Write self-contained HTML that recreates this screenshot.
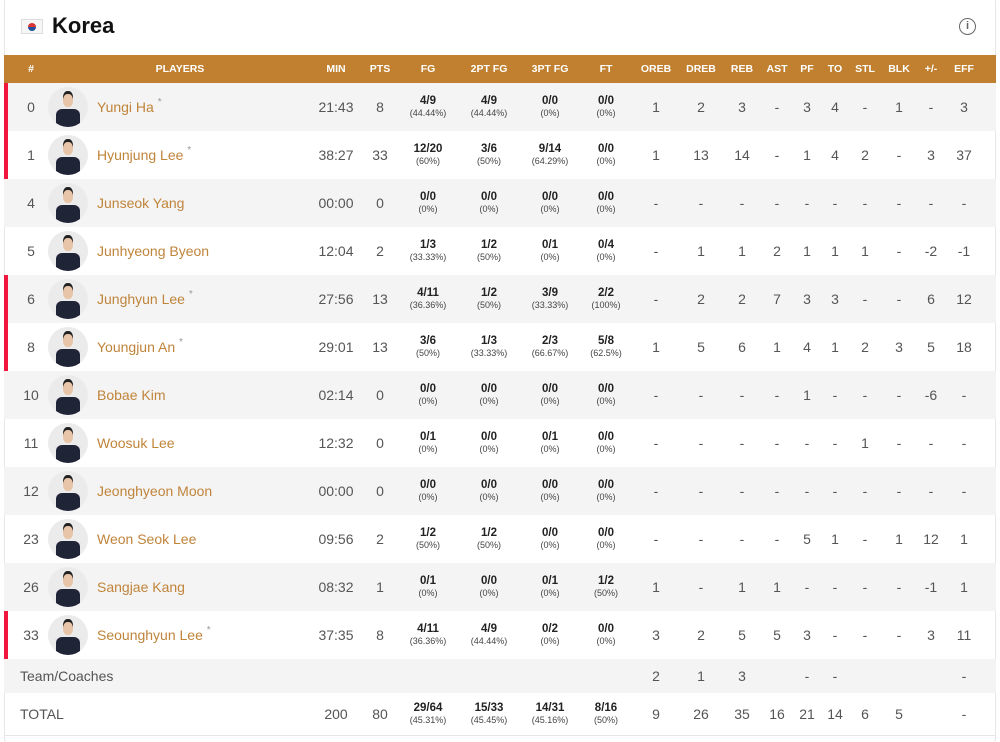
<!DOCTYPE html>
<html><head><meta charset="utf-8"><style>
*{margin:0;padding:0;box-sizing:border-box}
html,body{width:1000px;height:742px;overflow:hidden}
body{background:#fff;font-family:"Liberation Sans",sans-serif;position:relative}
.card{position:absolute;left:4px;top:-6px;width:992px;height:752px;border:1px solid #e6e6e6;border-radius:8px}
.title{position:absolute;left:52px;top:13px;font-size:22px;font-weight:bold;color:#111}
.flag{position:absolute;left:21px;top:19px;width:22px;height:15px;background:#f6f6f6;border:1px solid #ddd}
.flag:after{content:"";position:absolute;left:6px;top:3px;width:8px;height:8px;border-radius:50%;background:linear-gradient(#d33 50%,#2450a0 50%)}
.info{position:absolute;left:959px;top:18px;width:17px;height:17px;border:1.5px solid #666;border-radius:50%;font-size:11px;color:#666;text-align:center;line-height:14px;font-weight:bold}
.hd{position:absolute;left:4px;top:55px;width:992px;height:28px;background:#c08030}
.r{position:absolute;left:4px;width:992px;height:48px}
.g{background:#f4f4f4}
.st{border-left:4px solid #f0163c}
.r>span,.hd>span{position:absolute;top:0;height:100%;width:70px;margin-left:-39px;display:flex;flex-direction:column;align-items:center;justify-content:center;text-align:center;color:#555;font-size:14px}
.hd>span{color:#fff;font-size:10.5px;font-weight:bold}
.st>span{margin-left:-43px}
.r>span b{font-size:11.5px;color:#222;line-height:13px}
.r>span i{font-style:normal;font-size:9px;color:#444;line-height:11px}
.r>span.n{width:auto;margin-left:0;left:93px;color:#c0843a;align-items:flex-start;display:block;line-height:48px}
.r>span.n small{font-size:10px;color:#999;vertical-align:top;line-height:40px}
.st>span.n{left:89px}
.av{position:absolute;left:44px;top:4px;width:40px;height:40px;border-radius:50%;background:#ebebeb;overflow:hidden}
.st .av{left:40px}
.av:before{content:"";position:absolute;left:15px;top:7px;width:10px;height:13px;border-radius:45%;background:#e8c4a8;box-shadow:0 -3px 0 #222}
.av:after{content:"";position:absolute;left:8px;top:22px;width:24px;height:20px;border-radius:6px 6px 0 0;background:#1f2436}
.a{left:31px}.b{left:336px}.c{left:380px}.d{left:428px}.e{left:489px}.f{left:550px}.h{left:606px}.j{left:656px}.k{left:701px}.l{left:742px}.m{left:777px}.o{left:807px}.p{left:835px}.q{left:865px}.s{left:899px}.t{left:931px}.u{left:964px}
.foot{position:absolute;left:4px;top:735px;width:992px;border-top:1px solid #e6e6e6}
</style></head><body>
<div class="card"></div>
<div class="flag"></div><div class="title">Korea</div><div class="info">i</div>
<div class="hd"><span class="a">#</span><span style="left:180px">PLAYERS</span><span class="b">MIN</span><span class="c">PTS</span><span class="d">FG</span><span class="e">2PT FG</span><span class="f">3PT FG</span><span class="h">FT</span><span class="j">OREB</span><span class="k">DREB</span><span class="l">REB</span><span class="m">AST</span><span class="o">PF</span><span class="p">TO</span><span class="q">STL</span><span class="s">BLK</span><span class="t">+/-</span><span class="u">EFF</span></div>

<div class="r g st" style="top:83px"><span class="a">0</span><div class="av"></div><span class="n">Yungi Ha <small>*</small></span><span class="b">21:43</span><span class="c">8</span><span class="d"><b>4/9</b><i>(44.44%)</i></span><span class="e"><b>4/9</b><i>(44.44%)</i></span><span class="f"><b>0/0</b><i>(0%)</i></span><span class="h"><b>0/0</b><i>(0%)</i></span><span class="j">1</span><span class="k">2</span><span class="l">3</span><span class="m">-</span><span class="o">3</span><span class="p">4</span><span class="q">-</span><span class="s">1</span><span class="t">-</span><span class="u">3</span></div>

<div class="r st" style="top:131px"><span class="a">1</span><div class="av"></div><span class="n">Hyunjung Lee <small>*</small></span><span class="b">38:27</span><span class="c">33</span><span class="d"><b>12/20</b><i>(60%)</i></span><span class="e"><b>3/6</b><i>(50%)</i></span><span class="f"><b>9/14</b><i>(64.29%)</i></span><span class="h"><b>0/0</b><i>(0%)</i></span><span class="j">1</span><span class="k">13</span><span class="l">14</span><span class="m">-</span><span class="o">1</span><span class="p">4</span><span class="q">2</span><span class="s">-</span><span class="t">3</span><span class="u">37</span></div>

<div class="r g" style="top:179px"><span class="a">4</span><div class="av"></div><span class="n">Junseok Yang</span><span class="b">00:00</span><span class="c">0</span><span class="d"><b>0/0</b><i>(0%)</i></span><span class="e"><b>0/0</b><i>(0%)</i></span><span class="f"><b>0/0</b><i>(0%)</i></span><span class="h"><b>0/0</b><i>(0%)</i></span><span class="j">-</span><span class="k">-</span><span class="l">-</span><span class="m">-</span><span class="o">-</span><span class="p">-</span><span class="q">-</span><span class="s">-</span><span class="t">-</span><span class="u">-</span></div>

<div class="r" style="top:227px"><span class="a">5</span><div class="av"></div><span class="n">Junhyeong Byeon</span><span class="b">12:04</span><span class="c">2</span><span class="d"><b>1/3</b><i>(33.33%)</i></span><span class="e"><b>1/2</b><i>(50%)</i></span><span class="f"><b>0/1</b><i>(0%)</i></span><span class="h"><b>0/4</b><i>(0%)</i></span><span class="j">-</span><span class="k">1</span><span class="l">1</span><span class="m">2</span><span class="o">1</span><span class="p">1</span><span class="q">1</span><span class="s">-</span><span class="t">-2</span><span class="u">-1</span></div>

<div class="r g st" style="top:275px"><span class="a">6</span><div class="av"></div><span class="n">Junghyun Lee <small>*</small></span><span class="b">27:56</span><span class="c">13</span><span class="d"><b>4/11</b><i>(36.36%)</i></span><span class="e"><b>1/2</b><i>(50%)</i></span><span class="f"><b>3/9</b><i>(33.33%)</i></span><span class="h"><b>2/2</b><i>(100%)</i></span><span class="j">-</span><span class="k">2</span><span class="l">2</span><span class="m">7</span><span class="o">3</span><span class="p">3</span><span class="q">-</span><span class="s">-</span><span class="t">6</span><span class="u">12</span></div>

<div class="r st" style="top:323px"><span class="a">8</span><div class="av"></div><span class="n">Youngjun An <small>*</small></span><span class="b">29:01</span><span class="c">13</span><span class="d"><b>3/6</b><i>(50%)</i></span><span class="e"><b>1/3</b><i>(33.33%)</i></span><span class="f"><b>2/3</b><i>(66.67%)</i></span><span class="h"><b>5/8</b><i>(62.5%)</i></span><span class="j">1</span><span class="k">5</span><span class="l">6</span><span class="m">1</span><span class="o">4</span><span class="p">1</span><span class="q">2</span><span class="s">3</span><span class="t">5</span><span class="u">18</span></div>

<div class="r g" style="top:371px"><span class="a">10</span><div class="av"></div><span class="n">Bobae Kim</span><span class="b">02:14</span><span class="c">0</span><span class="d"><b>0/0</b><i>(0%)</i></span><span class="e"><b>0/0</b><i>(0%)</i></span><span class="f"><b>0/0</b><i>(0%)</i></span><span class="h"><b>0/0</b><i>(0%)</i></span><span class="j">-</span><span class="k">-</span><span class="l">-</span><span class="m">-</span><span class="o">1</span><span class="p">-</span><span class="q">-</span><span class="s">-</span><span class="t">-6</span><span class="u">-</span></div>

<div class="r" style="top:419px"><span class="a">11</span><div class="av"></div><span class="n">Woosuk Lee</span><span class="b">12:32</span><span class="c">0</span><span class="d"><b>0/1</b><i>(0%)</i></span><span class="e"><b>0/0</b><i>(0%)</i></span><span class="f"><b>0/1</b><i>(0%)</i></span><span class="h"><b>0/0</b><i>(0%)</i></span><span class="j">-</span><span class="k">-</span><span class="l">-</span><span class="m">-</span><span class="o">-</span><span class="p">-</span><span class="q">1</span><span class="s">-</span><span class="t">-</span><span class="u">-</span></div>

<div class="r g" style="top:467px"><span class="a">12</span><div class="av"></div><span class="n">Jeonghyeon Moon</span><span class="b">00:00</span><span class="c">0</span><span class="d"><b>0/0</b><i>(0%)</i></span><span class="e"><b>0/0</b><i>(0%)</i></span><span class="f"><b>0/0</b><i>(0%)</i></span><span class="h"><b>0/0</b><i>(0%)</i></span><span class="j">-</span><span class="k">-</span><span class="l">-</span><span class="m">-</span><span class="o">-</span><span class="p">-</span><span class="q">-</span><span class="s">-</span><span class="t">-</span><span class="u">-</span></div>

<div class="r" style="top:515px"><span class="a">23</span><div class="av"></div><span class="n">Weon Seok Lee</span><span class="b">09:56</span><span class="c">2</span><span class="d"><b>1/2</b><i>(50%)</i></span><span class="e"><b>1/2</b><i>(50%)</i></span><span class="f"><b>0/0</b><i>(0%)</i></span><span class="h"><b>0/0</b><i>(0%)</i></span><span class="j">-</span><span class="k">-</span><span class="l">-</span><span class="m">-</span><span class="o">5</span><span class="p">1</span><span class="q">-</span><span class="s">1</span><span class="t">12</span><span class="u">1</span></div>

<div class="r g" style="top:563px"><span class="a">26</span><div class="av"></div><span class="n">Sangjae Kang</span><span class="b">08:32</span><span class="c">1</span><span class="d"><b>0/1</b><i>(0%)</i></span><span class="e"><b>0/0</b><i>(0%)</i></span><span class="f"><b>0/1</b><i>(0%)</i></span><span class="h"><b>1/2</b><i>(50%)</i></span><span class="j">1</span><span class="k">-</span><span class="l">1</span><span class="m">1</span><span class="o">-</span><span class="p">-</span><span class="q">-</span><span class="s">-</span><span class="t">-1</span><span class="u">1</span></div>

<div class="r st" style="top:611px"><span class="a">33</span><div class="av"></div><span class="n">Seounghyun Lee <small>*</small></span><span class="b">37:35</span><span class="c">8</span><span class="d"><b>4/11</b><i>(36.36%)</i></span><span class="e"><b>4/9</b><i>(44.44%)</i></span><span class="f"><b>0/2</b><i>(0%)</i></span><span class="h"><b>0/0</b><i>(0%)</i></span><span class="j">3</span><span class="k">2</span><span class="l">5</span><span class="m">5</span><span class="o">3</span><span class="p">-</span><span class="q">-</span><span class="s">-</span><span class="t">3</span><span class="u">11</span></div>

<div class="r g" style="top:659px;height:34px"><span class="n" style="left:16px;color:#555;line-height:34px">Team/Coaches</span><span class="j">2</span><span class="k">1</span><span class="l">3</span><span class="o">-</span><span class="p">-</span><span class="u">-</span></div>

<div class="r" style="top:693px;height:42px"><span class="n" style="left:16px;color:#555;line-height:42px">TOTAL</span><span class="b">200</span><span class="c">80</span><span class="d"><b>29/64</b><i>(45.31%)</i></span><span class="e"><b>15/33</b><i>(45.45%)</i></span><span class="f"><b>14/31</b><i>(45.16%)</i></span><span class="h"><b>8/16</b><i>(50%)</i></span><span class="j">9</span><span class="k">26</span><span class="l">35</span><span class="m">16</span><span class="o">21</span><span class="p">14</span><span class="q">6</span><span class="s">5</span><span class="u">-</span></div>
<div class="foot"></div>
</body></html>
